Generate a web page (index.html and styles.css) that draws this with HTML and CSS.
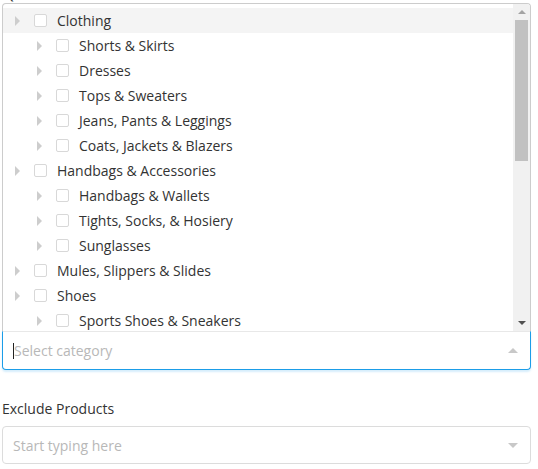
FILE: index.html
```html
<!DOCTYPE html>
<html>
<head>
<meta charset="utf-8">
<link rel="stylesheet" href="styles.css">
</head>
<body>
<div class="page">
  <div class="top-label"><span>Qualifying Categories</span></div>
  <div class="picker">
    <div class="panel">
      <div class="list">
        <div class="row hover"><span class="arrow"></span><span class="check"></span><span class="name">Clothing</span></div>
        <div class="row lvl2"><span class="arrow"></span><span class="check"></span><span class="name">Shorts &amp; Skirts</span></div>
        <div class="row lvl2"><span class="arrow"></span><span class="check"></span><span class="name">Dresses</span></div>
        <div class="row lvl2"><span class="arrow"></span><span class="check"></span><span class="name">Tops &amp; Sweaters</span></div>
        <div class="row lvl2"><span class="arrow"></span><span class="check"></span><span class="name">Jeans, Pants &amp; Leggings</span></div>
        <div class="row lvl2"><span class="arrow"></span><span class="check"></span><span class="name">Coats, Jackets &amp; Blazers</span></div>
        <div class="row"><span class="arrow"></span><span class="check"></span><span class="name">Handbags &amp; Accessories</span></div>
        <div class="row lvl2"><span class="arrow"></span><span class="check"></span><span class="name">Handbags &amp; Wallets</span></div>
        <div class="row lvl2"><span class="arrow"></span><span class="check"></span><span class="name">Tights, Socks, &amp; Hosiery</span></div>
        <div class="row lvl2"><span class="arrow"></span><span class="check"></span><span class="name">Sunglasses</span></div>
        <div class="row"><span class="arrow"></span><span class="check"></span><span class="name">Mules, Slippers &amp; Slides</span></div>
        <div class="row"><span class="arrow"></span><span class="check"></span><span class="name">Shoes</span></div>
        <div class="row lvl2"><span class="arrow"></span><span class="check"></span><span class="name">Sports Shoes &amp; Sneakers</span></div>
        <div class="row lvl2"><span class="arrow"></span><span class="check"></span><span class="name">Boots</span></div>
      </div>
      <div class="scrollbar">
        <div class="sb-btn"><span class="sb-up"></span></div>
        <div class="sb-track"><div class="sb-thumb"></div></div>
        <div class="sb-btn"><span class="sb-down"></span></div>
      </div>
    </div>
    <div class="select-box focused">
      <span class="caret"></span><span class="placeholder">Select category</span>
      <span class="tri up"></span>
    </div>
  </div>
  <div class="field-label">Exclude Products</div>
  <div class="select-box">
    <span class="placeholder">Start typing here</span>
    <span class="tri down"></span>
  </div>
</div>
</body>
</html>
```
FILE: styles.css
```css
html, body {
  margin: 0;
  padding: 0;
  background: #fff;
}
body {
  font-family: "Open Sans", "Liberation Sans", sans-serif;
  font-size: 14px;
  color: #333;
}
.page {
  padding-left: 2px;
  width: 529px;
}
.top-label {
  height: 3px;
  width: 11px;
  overflow: hidden;
  padding-left: 2px;
}
.top-label span {
  display: block;
  margin-top: -16px;
  line-height: 19px;
  white-space: nowrap;
}
.picker {
  display: flex;
  flex-direction: column;
}
.panel {
  display: flex;
  height: 327px;
  border: 1px solid #ccc;
  border-bottom: none;
  border-radius: 4px 4px 0 0;
  overflow: hidden;
}
.list {
  flex: 1;
  overflow: hidden;
  padding-top: 4px;
}
.row {
  display: flex;
  align-items: center;
  height: 25px;
  padding-left: 12px;
  white-space: nowrap;
}
.row.lvl2 {
  padding-left: 34px;
}
.row.hover {
  background: #f4f4f4;
}
.arrow {
  width: 0;
  height: 0;
  border-left: 5px solid #cdcdcd;
  border-top: 5px solid transparent;
  border-bottom: 5px solid transparent;
  margin-right: 14px;
}
.check {
  width: 11px;
  height: 11px;
  border: 1px solid #d8d8d8;
  border-radius: 2px;
  background: #fff;
  margin-right: 10px;
}
.name {
  line-height: 19px;
  color: #333;
}
.scrollbar {
  width: 17px;
  display: flex;
  flex-direction: column;
  background: #f1f1f1;
}
.sb-btn {
  height: 16px;
  display: flex;
  align-items: center;
  justify-content: center;
}
.sb-up {
  width: 0;
  height: 0;
  border-left: 4px solid transparent;
  border-right: 4px solid transparent;
  border-bottom: 4px solid #a3a3a3;
}
.sb-down {
  width: 0;
  height: 0;
  border-left: 4px solid transparent;
  border-right: 4px solid transparent;
  border-top: 4px solid #505050;
}
.sb-track {
  flex: 1;
  padding: 0 2px;
}
.sb-thumb {
  height: 141px;
  background: #c1c1c1;
}
.select-box {
  display: flex;
  align-items: center;
  height: 36px;
  border: 1px solid #dcdcdc;
  border-radius: 4px;
  padding: 0 12px 0 10px;
  background: #fff;
}
.select-box.focused {
  height: 37px;
  border-color: #1b9de8;
  border-top-color: #e8e8e8;
  border-radius: 0 0 4px 4px;
  box-shadow: 0 2px 2px rgba(27, 157, 232, 0.18);
}
.caret {
  width: 1px;
  height: 16px;
  background: #222;
}
.placeholder {
  flex: 1;
  color: #b8b8b8;
  line-height: 19px;
}
.tri {
  width: 0;
  height: 0;
  border-left: 5px solid transparent;
  border-right: 5px solid transparent;
}
.tri.up {
  border-bottom: 5px solid #c8c8c8;
}
.tri.down {
  border-top: 5px solid #c8c8c8;
}
.field-label {
  margin-top: 29px;
  margin-bottom: 8px;
  line-height: 19px;
  color: #333;
}
```
